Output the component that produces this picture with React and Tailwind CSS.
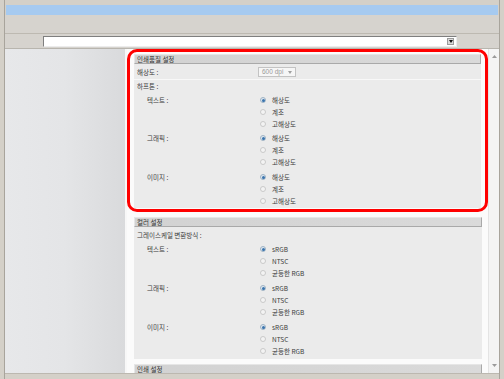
import React from "react";

const font = "font-['Noto_Sans_CJK_KR','Noto_Sans',sans-serif]";

const GROUPS_QUALITY = [
  { label: "텍스트 :", options: ["해상도", "계조", "고해상도"], gap: "mt-[2px]" },
  { label: "그래픽 :", options: ["해상도", "계조", "고해상도"], gap: "mt-[2px]" },
  { label: "이미지 :", options: ["해상도", "계조", "고해상도"], gap: "mt-[3px]" },
];

const GROUPS_COLOR = [
  { label: "텍스트 :", options: ["sRGB", "NTSC", "균등한 RGB"], gap: "mt-[2px]" },
  { label: "그래픽 :", options: ["sRGB", "NTSC", "균등한 RGB"], gap: "mt-[3px]" },
  { label: "이미지 :", options: ["sRGB", "NTSC", "균등한 RGB"], gap: "mt-[3px]" },
];

function Radio({ label, checked }) {
  return (
    <div className="flex h-[12px] items-center">
      {checked ? (
        <span className="flex h-[6px] w-[6px] items-center justify-center rounded-full border border-[#9fb2c4] bg-[#dfe8f0]">
          <span className="h-[3px] w-[3px] rounded-full bg-[#3a74ad]" />
        </span>
      ) : (
        <span className="h-[6px] w-[6px] rounded-full border border-[#c9c9c9] bg-[#f3f3f3]" />
      )}
      <span className="ml-[6px] leading-none">{label}</span>
    </div>
  );
}

function RadioGroup({ group }) {
  return (
    <div className={`grid grid-cols-[123px_1fr] ${group.gap}`}>
      <div className="flex h-[12px] items-center pl-[10px] leading-none text-[#3a3a3a]">
        {group.label}
      </div>
      <div className="flex flex-col">
        {group.options.map((opt, i) => (
          <Radio key={opt} label={opt} checked={i === 0} />
        ))}
      </div>
    </div>
  );
}

function SectionHeader({ title }) {
  return (
    <div className="flex h-[10px] items-center border border-t-[#e6e6e6] border-l-[#e6e6e6] border-r-[#a9a9a9] border-b-[#a9a9a9] bg-gradient-to-r from-[#d2d2d2] to-[#dadada] pl-[2px] leading-none text-[#333]">
      {title}
    </div>
  );
}

function ScrollArrow({ down }) {
  return (
    <svg width="5" height="3" viewBox="0 0 5 3">
      <path d={down ? "M0 0 L5 0 L2.5 3 Z" : "M0 3 L5 3 L2.5 0 Z"} fill="#9a9a9a" />
    </svg>
  );
}

export default function App() {
  return (
    <div
      className={`h-[379px] w-[504px] overflow-hidden bg-[#d4d0c8] px-[4px] text-[6.5px] text-[#3a3a3a] ${font}`}
    >
      <div className="flex h-full flex-col border-x border-[#a8a49c]">
        <div className="h-[5px]" />
        <div className="mx-[1px] h-[10px] bg-[#a6caf0]" />
        <div className="h-[19px] border-b border-[#bdb9b1] bg-[#d6d3ce]" />
        <div className="flex h-[14px] items-center bg-[#d6d3ce] pl-[38px]">
          <div className="flex h-[11px] w-[414px] items-center justify-end border border-t-[#7f7f7f] border-l-[#7f7f7f] border-r-[#ececec] border-b-[#ececec] bg-white pr-[2px]">
            <div className="flex h-[7px] w-[7px] items-center justify-center border border-[#9a9a9a] bg-[#d8d8d8]">
              <svg width="4" height="3" viewBox="0 0 4 3">
                <path d="M0 0 L4 0 L2 3 Z" fill="#111" />
              </svg>
            </div>
          </div>
        </div>
        <div className="flex h-[325px] border-t border-[#b8b5ae]">
          <div className="w-[120px] bg-gradient-to-r from-[#e7e8ea] via-[#e4e5e7] to-[#d9dadc]" />
          <div className="flex flex-1 flex-col overflow-hidden border-l-2 border-[#f7f7f7] bg-[#fbfbfb]">
            <div className="rounded-[10px] border-[3px] border-[#ff0000] px-[4px] pt-[2px] pb-[1px]">
              <SectionHeader title="인쇄품질 설정" />
              <div className="bg-[#ebebeb] pt-[2px] pl-[3px]">
                <div className="grid h-[12px] grid-cols-[121px_1fr] items-center">
                  <div className="leading-none">해상도 :</div>
                  <div className="flex h-[10px] w-[38px] items-center justify-between border border-[#c3c3c3] bg-[#f6f6f6] px-[3px] leading-none text-[#9a9a9a] font-['Liberation_Sans',sans-serif]">
                    <span>600 dpi</span>
                    <svg width="4" height="3" viewBox="0 0 4 3">
                      <path d="M0 0 L4 0 L2 3 Z" fill="#a0a0a0" />
                    </svg>
                  </div>
                </div>
                <div className="-ml-[3px] mt-[1px] h-px bg-[#f8f8f8]" />
                <div className="flex h-[12px] items-center leading-none">하프톤 :</div>
                {GROUPS_QUALITY.map((g) => (
                  <RadioGroup key={g.label} group={g} />
                ))}
                <div className="h-[1px]" />
              </div>
            </div>
            <div className="mt-[5px] ml-[7px] mr-[6px]">
              <SectionHeader title="컬러 설정" />
              <div className="bg-[#ebebeb] pt-[2px] pb-[2px] pl-[3px]">
                <div className="flex h-[12px] items-center leading-none">그레이스케일 변환방식 :</div>
                {GROUPS_COLOR.map((g) => (
                  <RadioGroup key={g.label} group={g} />
                ))}
              </div>
              <div className="mt-[5px]">
                <SectionHeader title="인쇄 설정" />
              </div>
            </div>
          </div>
          <div className="flex w-[11px] flex-col items-center justify-between border-l border-[#e4e4e4] bg-[#f4f4f4] py-[6px]">
            <ScrollArrow />
            <ScrollArrow down />
          </div>
        </div>
        <div className="flex-1 border-t border-[#bcb8b0]" />
      </div>
    </div>
  );
}
